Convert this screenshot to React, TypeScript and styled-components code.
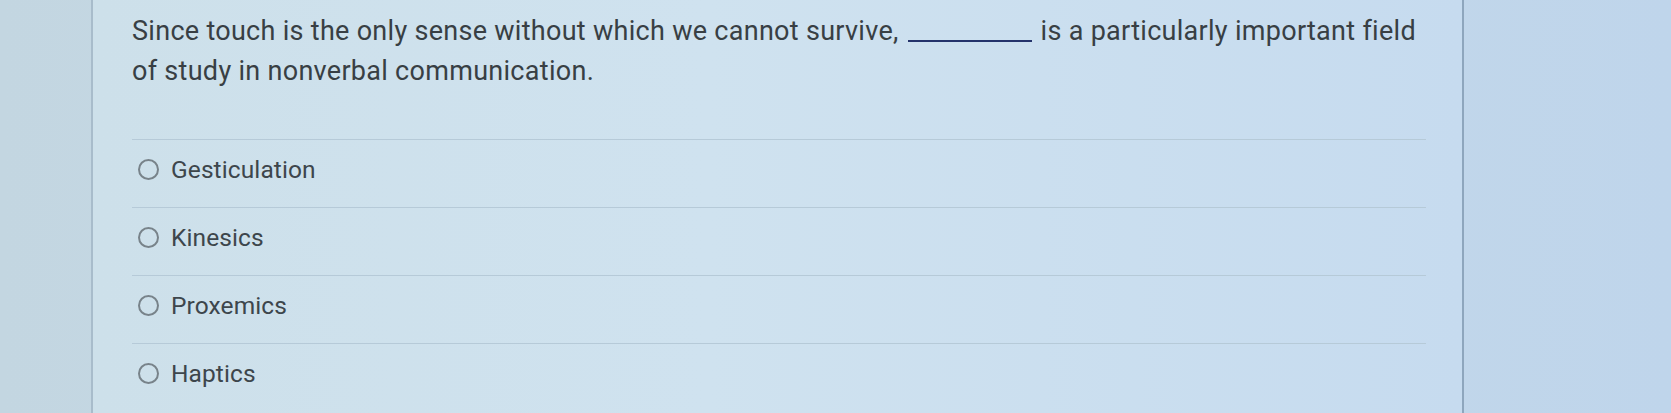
import styled, {createGlobalStyle} from 'styled-components';

const GlobalStyle = createGlobalStyle`
    html, body {
        margin: 0;
        padding: 0;
    }
    body {
        width: 1671px;
        height: 413px;
        overflow: hidden;
        background: linear-gradient(90deg, #c3d6e1 0%, #c6dae8 40%, #bfd5eb 100%);
        font-family: Roboto, "Noto Sans", sans-serif;
    }
`;

const options = ['Gesticulation', 'Kinesics', 'Proxemics', 'Haptics'];

const App = () => {
    return <>
        <GlobalStyle/>
        <Page>
            <Panel>
                <Question>
                    Since touch is the only sense without which we cannot survive, <Blank/> is a particularly important field of study in nonverbal communication.
                </Question>

                <OptionList>
                    {options.map(option => {
                        return <Option key={option}>
                            <Radio/>
                            <Label>{option}</Label>
                        </Option>;
                    })}
                </OptionList>
            </Panel>
        </Page>
    </>;
};

export default App;




const Label = styled.span`
    font-size: 24.5px;
    color: #3d464c;
    letter-spacing: 0.1px;
`;

const Radio = styled.span`
    box-sizing: border-box;
    width: 21px;
    height: 21px;
    margin-left: 6px;
    border: 2px solid #78838a;
    border-radius: 50%;
    flex-shrink: 0;
`;

const Option = styled.div`
    display: flex;
    align-items: center;
    gap: 12px;
    height: 68px;
    padding-bottom: 8px;
    box-sizing: border-box;
    border-top: 1px solid #b6cad8;
`;

const OptionList = styled.div`
    display: flex;
    flex-direction: column;
    margin-top: 48px;
    margin-right: 36px;
`;

const Blank = styled.span`
    display: inline-block;
    width: 124px;
    height: 2px;
    margin: 0 2px;
    background: #24336b;
    vertical-align: -2px;
`;

const Question = styled.div`
    width: 1298px;
    font-size: 27px;
    letter-spacing: 0.29px;
    line-height: 40px;
    color: #383f44;
`;

const Panel = styled.div`
    width: 1373px;
    height: 413px;
    box-sizing: border-box;
    padding: 11px 0 0 39px;
    border-left: 2px solid #a8bccb;
    border-right: 2px solid #8ea6bd;
    background: linear-gradient(90deg, #cde0ea 0%, #cfe2ef 45%, #c6dbef 100%);
`;

const Page = styled.div`
    padding-left: 91px;
`;
